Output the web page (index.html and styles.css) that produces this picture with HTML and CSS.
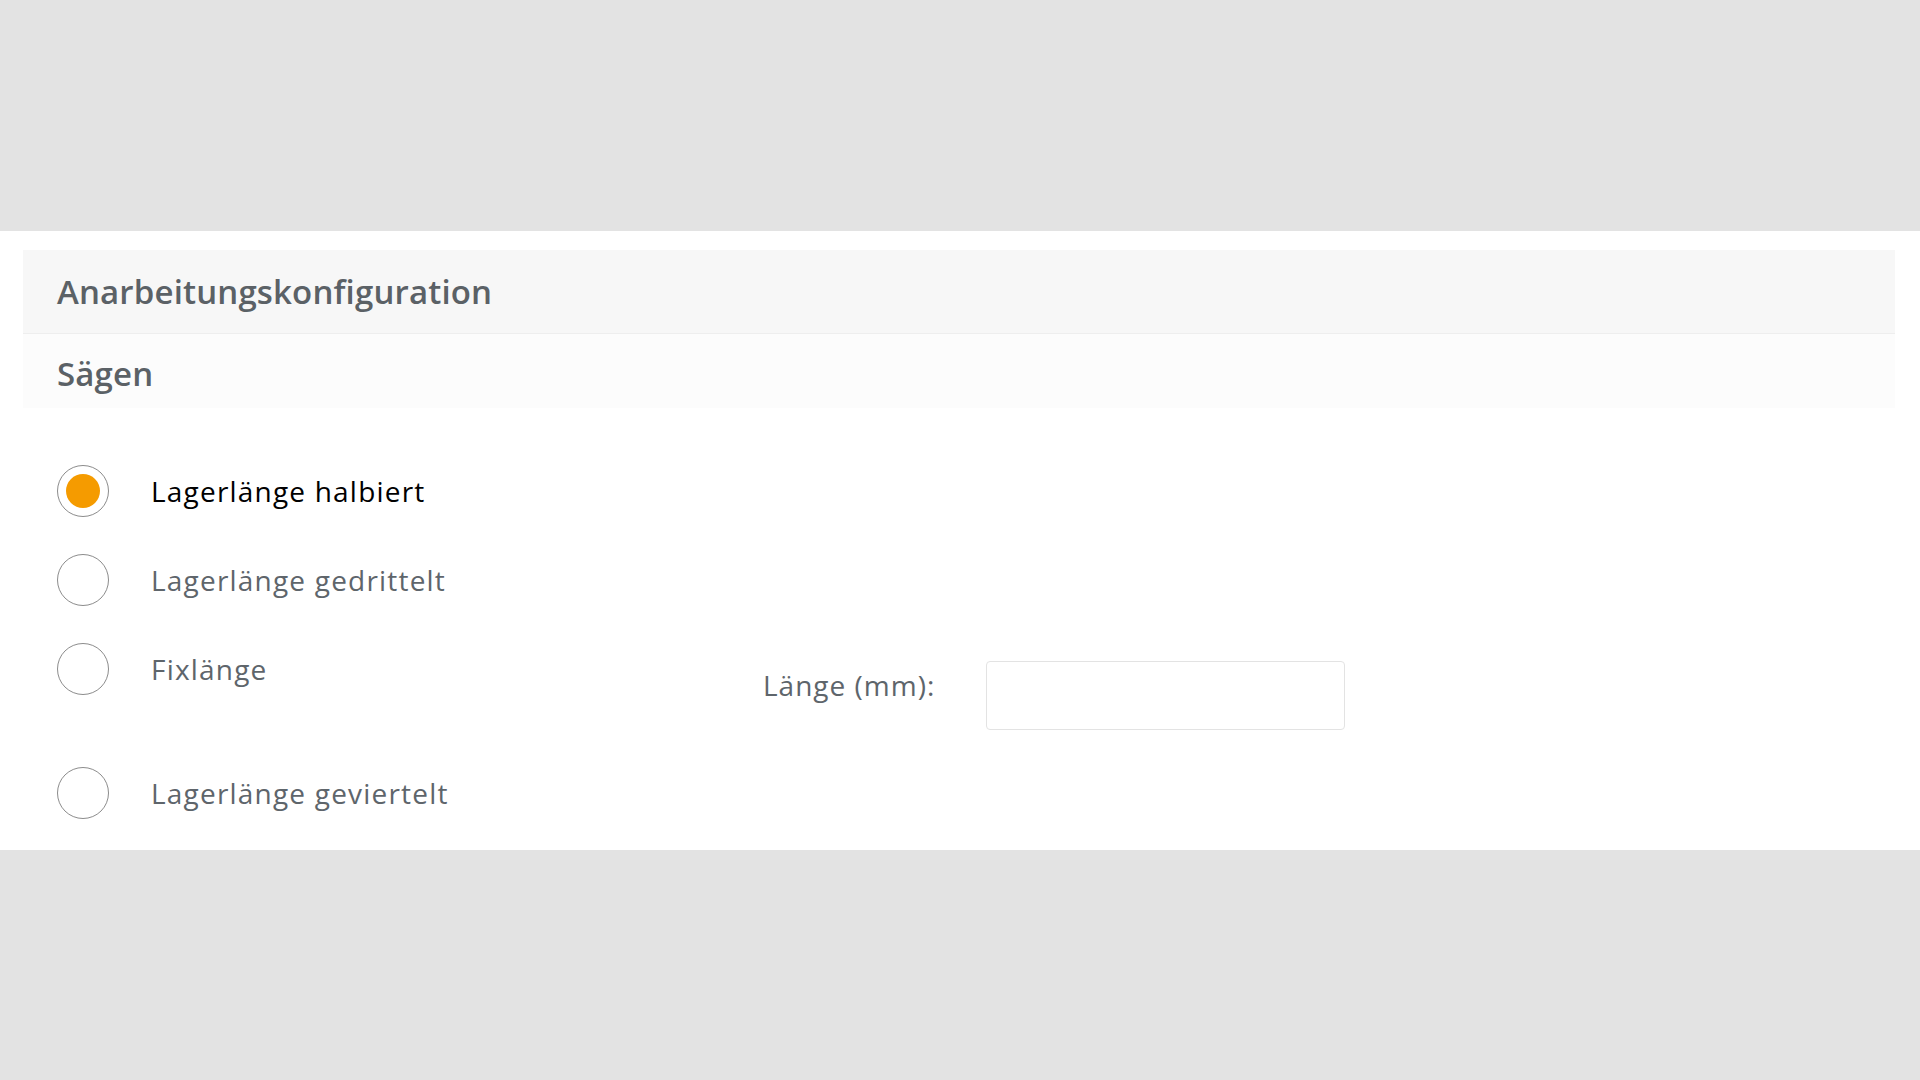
FILE: index.html
```html
<!DOCTYPE html>
<html lang="de">
<head>
<meta charset="utf-8">
<title>Anarbeitungskonfiguration</title>
<link rel="stylesheet" href="styles.css">
</head>
<body>
<div class="top-space"></div>
<section class="panel">
  <div class="panel-head">
    <h1 class="panel-title">Anarbeitungskonfiguration</h1>
  </div>
  <div class="panel-sub">
    <h2 class="panel-subtitle">Sägen</h2>
  </div>
  <div class="options">
    <div class="option">
      <label class="choice">
        <span class="radio checked"><span class="dot"></span></span>
        <span class="choice-label selected">Lagerlänge halbiert</span>
      </label>
    </div>
    <div class="option">
      <label class="choice">
        <span class="radio"></span>
        <span class="choice-label">Lagerlänge gedrittelt</span>
      </label>
    </div>
    <div class="option option-fields">
      <label class="choice choice-wide">
        <span class="radio"></span>
        <span class="choice-label">Fixlänge</span>
      </label>
      <div class="fields">
        <span class="field-label">Länge (mm):</span>
        <span class="field-input"></span>
      </div>
    </div>
    <div class="option">
      <label class="choice">
        <span class="radio"></span>
        <span class="choice-label">Lagerlänge geviertelt</span>
      </label>
    </div>
  </div>
</section>
</body>
</html>
```

FILE: styles.css
```css
html, body {
  margin: 0;
  padding: 0;
}
body {
  background: #e3e3e3;
  font-family: "Open Sans", "Noto Sans", sans-serif;
  color: #5e656b;
  width: 1920px;
  height: 1080px;
  overflow: hidden;
}
.top-space {
  height: 231px;
}
.panel {
  background: #ffffff;
  padding: 19px 25px 31px 23px;
}
.panel-head {
  height: 84px;
  box-sizing: border-box;
  background: #f7f7f7;
  border-bottom: 1px solid #eeeeee;
  display: flex;
  align-items: center;
  padding-left: 34px;
}
.panel-title {
  margin: 0;
  font-size: 33px;
  font-weight: 600;
  letter-spacing: 0.15px;
  color: #5b6166;
  line-height: 1;
}
.panel-sub {
  height: 74px;
  box-sizing: border-box;
  background: #fcfcfc;
  display: flex;
  align-items: center;
  padding: 5px 0 0 34px;
}
.panel-subtitle {
  margin: 0;
  font-size: 33px;
  font-weight: 600;
  letter-spacing: 0.15px;
  color: #5b6166;
  line-height: 1;
}
.options {
  display: flex;
  flex-direction: column;
  gap: 37px;
  padding: 57px 0 0 34px;
}
.option {
  display: flex;
  align-items: flex-start;
}
.choice {
  display: flex;
  align-items: center;
}
.choice-wide {
  flex: 0 0 706px;
}
.radio {
  width: 52px;
  height: 52px;
  box-sizing: border-box;
  border: 1px solid #8c8c8c;
  border-radius: 50%;
  background: #ffffff;
  display: flex;
  align-items: center;
  justify-content: center;
  flex: 0 0 auto;
}
.dot {
  width: 34px;
  height: 34px;
  border-radius: 50%;
  background: #f59b00;
}
.choice-label {
  margin-left: 42px;
  font-size: 28px;
  letter-spacing: 1.2px;
  line-height: 1.5;
  color: #5e656b;
}
.choice-label.selected {
  color: #000000;
}
.fields {
  display: flex;
  align-items: flex-start;
  margin-top: 18px;
}
.field-label {
  flex: 0 0 223px;
  padding-top: 3px;
  font-size: 28px;
  letter-spacing: 1.0px;
  line-height: 1.5;
  color: #5e656b;
}
.field-input {
  width: 359px;
  height: 69px;
  box-sizing: border-box;
  border: 1px solid #e3e3e3;
  border-radius: 4px;
  background: #ffffff;
}
```
